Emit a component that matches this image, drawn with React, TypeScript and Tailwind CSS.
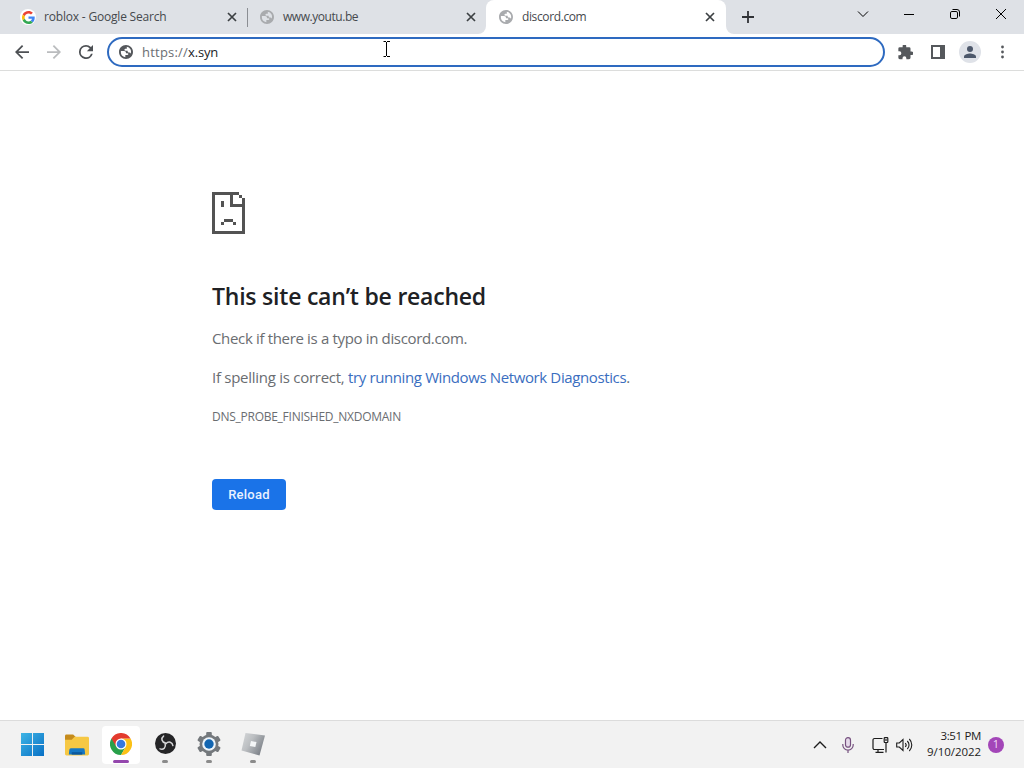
import type { ReactNode } from "react";

function GoogleIcon() {
  return (
    <span className="flex h-4 w-4 items-center justify-center rounded-full bg-white">
      <svg viewBox="0 0 48 48" className="h-[13px] w-[13px]">
        <path fill="#EA4335" d="M24 9.5c3.54 0 6.71 1.22 9.21 3.6l6.85-6.85C35.9 2.38 30.47 0 24 0 14.62 0 6.51 5.38 2.56 13.22l7.98 6.19C12.43 13.72 17.74 9.5 24 9.5z" />
        <path fill="#4285F4" d="M46.98 24.55c0-1.57-.15-3.09-.38-4.55H24v9.02h12.94c-.58 2.96-2.26 5.48-4.78 7.18l7.73 6c4.51-4.18 7.09-10.36 7.09-17.65z" />
        <path fill="#FBBC05" d="M10.53 28.59A14.5 14.5 0 0 1 9.77 24c0-1.6.27-3.14.76-4.59l-7.98-6.19A23.9 23.9 0 0 0 0 24c0 3.88.92 7.54 2.56 10.78l7.97-6.19z" />
        <path fill="#34A853" d="M24 48c6.48 0 11.93-2.13 15.89-5.81l-7.73-6c-2.15 1.45-4.92 2.3-8.16 2.3-6.26 0-11.57-4.22-13.47-9.91l-7.98 6.19C6.51 42.62 14.62 48 24 48z" />
      </svg>
    </span>
  );
}

function GlobeIcon({ className }: { className: string }) {
  return (
    <svg viewBox="0 0 24 24" fill="currentColor" className={className}>
      <path d="M12 1.500C6.200 1.500 1.500 6.200 1.500 12S6.200 22.500 12 22.500 22.500 17.800 22.500 12 17.800 1.500 12 1.500zM4.300 12c0-.500.050-1 .140-1.500H9c2.200 0 3 1.300 3 3.200h2.300c.800 0 1.200.500 1.200 1.200 0 1.100-.800 1.700-2 1.700H11v3.100A7.700 7.700 0 0 1 4.300 12zm15 2.500c-.600-1.200-1.800-1.600-3.100-1.600-1.100 0-1.700-.500-1.700-1.500V10h-3.300c-1 0-1.500-.600-1.500-1.500 0-1.100.800-1.500 2-1.500h1.500V4.300a7.700 7.700 0 0 1 6.100 10.200z" />
    </svg>
  );
}

function CloseIcon() {
  return (
    <svg viewBox="0 0 10 10" className="h-[10px] w-[10px]" stroke="#3c4043" strokeWidth="1.7">
      <path d="M1 1l8 8M9 1L1 9" />
    </svg>
  );
}

function Tab({ icon, title, className }: { icon: ReactNode; title: ReactNode; className: string }) {
  return (
    <div className={`flex h-[34px] shrink-0 items-center ${className}`}>
      {icon}
      <div className="ml-2 flex-1 text-xs whitespace-nowrap text-[#45494d]">{title}</div>
      <CloseIcon />
    </div>
  );
}

function TabStrip() {
  return (
    <header className="flex h-[34px] bg-[#dee1e6]">
      <Tab
        className="w-[247px] pr-[10px] pl-5"
        icon={<GoogleIcon />}
        title={<span className="tracking-[-0.19px]">roblox - Google Search</span>}
      />
      <div className="mt-2 h-[19px] w-px bg-[#8b8e93]" />
      {/* white behind the grey corners gives the active tab its flared feet */}
      <div className="bg-white">
        <Tab
          className="w-[238px] rounded-br-lg bg-[#dee1e6] pr-[10px] pl-[11px]"
          icon={<GlobeIcon className="h-4 w-4 text-[#a9abae]" />}
          title={<span className="tracking-[-0.45px]">www.youtu.be</span>}
        />
      </div>
      <Tab
        className="w-[240px] rounded-t-lg bg-white pr-[11px] pl-3"
        icon={<GlobeIcon className="h-4 w-4 text-[#a9abae]" />}
        title={<span className="tracking-[-0.38px]">discord.com</span>}
      />
      <div className="flex flex-1 bg-white">
        <div className="flex flex-1 items-center rounded-bl-lg bg-[#dee1e6]">
          <svg viewBox="0 0 12 12" className="ml-4 h-3 w-3" stroke="#303236" strokeWidth="1.8">
            <path d="M6 0v12M0 6h12" />
          </svg>
          <div className="mb-[6px] ml-auto flex items-center text-black">
            <svg viewBox="0 0 12 12" className="h-3 w-3" fill="none" stroke="currentColor">
              <path d="M1 3.5l5 5 5-5" />
            </svg>
            <svg viewBox="0 0 12 12" className="ml-[34px] h-3 w-3" fill="none" stroke="currentColor">
              <path d="M1 6.5h10" />
            </svg>
            <svg viewBox="0 0 12 12" className="ml-[34px] h-3 w-3" fill="none" stroke="currentColor">
              <rect x="1.5" y="3.5" width="7" height="7" rx="1.4" />
              <path d="M3.5 1.5h4.5a2.5 2.5 0 0 1 2.5 2.5v4.5" />
            </svg>
            <svg viewBox="0 0 12 12" className="mr-[17px] ml-[34px] h-3 w-3" fill="none" stroke="currentColor">
              <path d="M1 1l10 10M11 1L1 11" />
            </svg>
          </div>
        </div>
      </div>
    </header>
  );
}

function Toolbar() {
  return (
    <div className="flex h-[37px] items-center border-b border-[#dcdddc] bg-white text-[#55585c]">
      <svg viewBox="4 4 16 16" className="ml-[15px] h-[14px] w-[14px]" fill="#4d5054">
        <path d="M20 11H7.83l5.59-5.59L12 4l-8 8 8 8 1.41-1.41L7.83 13H20v-2z" />
      </svg>
      <svg viewBox="4 4 16 16" className="ml-[18px] h-[14px] w-[14px]" fill="#babcbe">
        <path d="M12 4l-1.41 1.41L16.17 11H4v2h12.17l-5.58 5.59L12 20l8-8z" />
      </svg>
      <svg viewBox="4 4 16 16" className="ml-[18px] h-[14px] w-[14px]" fill="#4d5054">
        <path d="M17.65 6.35A7.96 7.96 0 0 0 12 4a8 8 0 1 0 7.73 10h-2.08A6 6 0 1 1 12 6c1.66 0 3.14.69 4.22 1.78L13 11h7V4l-2.35 2.35z" />
      </svg>
      <div className="relative ml-[14px] flex h-[30px] w-[778px] items-center rounded-full border-2 border-[#2e6ac0] pl-[9px]">
        <GlobeIcon className="h-4 w-4" />
        <div className="mt-[2px] ml-2 text-[13px] text-[#212326]">
          <span className="tracking-[0.22px] text-[#6b6e72]">https://</span>
          <span className="tracking-[-0.2px]">x.syn</span>
        </div>
        {/* text cursor */}
        <svg viewBox="0 0 8 16" className="absolute top-[2px] left-[274px] h-4 w-2" fill="none" stroke="black">
          <path d="M0.5 .5h2.5M4 .5h3M3.5 1v14M.5 15.5h2.5M4 15.5h3" />
        </svg>
      </div>
      <svg viewBox="1.5 2 21 21" className="ml-[13px] h-[15px] w-[15px]" fill="currentColor">
        <path d="M20.5 11H19V7a2 2 0 0 0-2-2h-4V3.500a2.500 2.500 0 0 0-5 0V5H4a2 2 0 0 0-2 2v3.800h1.500a2.700 2.700 0 0 1 0 5.400H2V20c0 1.100.9 2 2 2h3.800v-1.500a2.700 2.700 0 0 1 5.400 0V22H17a2 2 0 0 0 2-2v-4h1.500a2.500 2.500 0 0 0 0-5z" />
      </svg>
      <svg viewBox="0 0 14 14" className="ml-[18px] h-[14px] w-[14px]" fill="currentColor">
        <path fillRule="evenodd" d="M0 0h14v14H0zM2 2v10h7V2z" />
      </svg>
      <div className="ml-[14px] flex h-[22px] w-[22px] items-center justify-center rounded-full bg-[#dfe2e8]">
        <svg viewBox="4 4 16 16" className="h-3 w-3" fill="#4d586b">
          <circle cx="12" cy="8" r="4" />
          <path d="M12 14c-2.670 0-8 1.340-8 4v2h16v-2c0-2.660-5.330-4-8-4z" />
        </svg>
      </div>
      <svg viewBox="0 0 4 14" className="ml-[19px] h-[14px] w-1" fill="currentColor">
        <circle cx="2.500" cy="2" r="1.400" />
        <circle cx="2.500" cy="7" r="1.400" />
        <circle cx="2.500" cy="12" r="1.400" />
      </svg>
    </div>
  );
}

function SadPage() {
  return (
    <svg viewBox="0 0 11 14" className="h-[42px] w-[33px]" fill="#535353" shapeRendering="crispEdges">
      <path d="M0 0h9v1H7v3h3V3h1v11H0zM1 1v12h9V5H6V1z" fillRule="evenodd" />
      <path d="M9 1h1v1H9zM10 2h1v1h-1zM3 3h1v2H3zM4 9h3v1H4zM3 10h1v1H3zM7 10h1v1H7z" />
    </svg>
  );
}

function ErrorPage() {
  return (
    <main className="flex-1 bg-white pt-[121px] pl-[212px] text-[#6a6d71]">
      <SadPage />
      <h1 className="mt-[45px] text-[23px] leading-[34px] font-semibold whitespace-nowrap text-[#202124]">
        <span className="tracking-[-0.22px]">This site can’t be reached</span>
      </h1>
      <p className="mt-[14px] text-[15px] leading-[22px]">
        <span className="tracking-[-0.34px]">Check if there is a typo in discord.com.</span>
      </p>
      <p className="mt-[17px] text-[15px] leading-[22px]">
        <span className="tracking-[-0.27px]">If spelling is correct, </span>
        <a className="tracking-[-0.38px] text-[#3a6ec0]">try running Windows Network Diagnostics</a>.
      </p>
      <p className="mt-[19px] text-xs leading-5">
        <span className="tracking-[-0.26px]">DNS_PROBE_FINISHED_NXDOMAIN</span>
      </p>
      <button className="mt-[52px] block h-[31px] w-[74px] rounded bg-[#1a73e8] font-[Roboto] text-[13px] font-medium tracking-[0.25px] text-[#e8f1ff]">
        Reload
      </button>
    </main>
  );
}

function TaskItem({ children, active }: { children: ReactNode; active?: boolean }) {
  return (
    <div
      className={`flex h-[38px] w-[38px] flex-col items-center rounded pt-[6px] ${active ? "bg-white" : ""}`}
    >
      <div className="flex h-6 w-6 items-center justify-center">{children}</div>
      <div
        className={`mt-[4px] h-[3px] shrink-0 rounded-full ${active ? "w-4 bg-[#9447ad]" : "w-[6px] bg-[#8b8b8b]"}`}
      />
    </div>
  );
}

function Taskbar() {
  return (
    <footer className="flex h-12 items-center border-t border-[#dcdcdc] bg-[#f2f2f2] text-[#1c1c1c]">
      <svg viewBox="0 0 24 24" className="ml-[21px] h-[23px] w-[23px] shrink-0">
        <defs>
          <linearGradient id="win" x1="0" y1="0" x2="24" y2="24" gradientUnits="userSpaceOnUse">
            <stop stopColor="#3fb5e5" />
            <stop offset="1" stopColor="#0870c5" />
          </linearGradient>
        </defs>
        <path fill="url(#win)" d="M0 0h11.500v11.500H0zM12.500 0H24v11.500H12.500zM0 12.500h11.500V24H0zM12.500 12.500H24V24H12.500z" />
      </svg>
      <svg viewBox="0 0 25 22" className="ml-[21px] h-[22px] w-[24px] shrink-0">
        <path fill="#c58b1c" d="M1.500 0h7l3 3-2 3H0V1.500A1.500 1.500 0 0 1 1.500 0z" />
        <path fill="#f6c844" d="M10 2.500h13.500A1.500 1.500 0 0 1 25 4v16.500a1.500 1.500 0 0 1-1.500 1.500h-22A1.500 1.500 0 0 1 0 20.500V5.500h7z" />
        <path fill="#1678c4" d="M6 14.500h13a1.500 1.500 0 0 1 1.500 1.500l.5 5H4l.5-5a2 2 0 0 1 1.500-1.500z" />
        <path fill="#0b589c" d="M7 18.500h11V21H7z" />
      </svg>
      <div className="ml-[13px] flex gap-[6px]">
        <TaskItem active>
          <svg viewBox="0 0 24 24" className="h-[22px] w-[22px]">
            <path fill="#28a04a" d="M1.600 6A12 12 0 0 0 12 24l5.200-9z" />
            <path fill="#fbc116" d="M22.400 6A12 12 0 0 1 12 24l5.200-9L12 6z" />
            <path fill="#e33b2e" d="M1.600 6L6.800 15 12 6h10.400A12 12 0 0 0 1.600 6z" />
            <circle cx="12" cy="12" r="6" fill="white" />
            <circle cx="12" cy="12" r="4.700" fill="#3478de" />
          </svg>
        </TaskItem>
        <TaskItem>
          <svg viewBox="0 0 24 24" className="h-[21px] w-[21px]">
            <circle cx="12" cy="12" r="12" fill="#252527" />
            <g fill="none" stroke="#d8d8da" strokeWidth="1.700" strokeLinecap="round">
              <path d="M12 11.500C7.500 10.500 6.500 6 9.800 3.500" />
              <path d="M12 11.500C7.500 10.500 6.500 6 9.800 3.500" transform="rotate(120 12 12)" />
              <path d="M12 11.500C7.500 10.500 6.500 6 9.800 3.500" transform="rotate(240 12 12)" />
            </g>
          </svg>
        </TaskItem>
        <TaskItem>
          <svg viewBox="0 0 24 24" className="h-6 w-6 shrink-0">
            <g fill="#74787c">
              <circle cx="12" cy="12" r="9.500" />
              <rect x="9.200" width="5.600" height="24" rx="1" />
              <rect x="9.200" width="5.600" height="24" rx="1" transform="rotate(60 12 12)" />
              <rect x="9.200" width="5.600" height="24" rx="1" transform="rotate(120 12 12)" />
            </g>
            <circle cx="12" cy="12" r="6.800" fill="#edf4fa" />
            <circle cx="12" cy="12" r="4.700" fill="#1265b1" />
          </svg>
        </TaskItem>
        <TaskItem>
          <svg viewBox="0 0 24 24" className="h-6 w-6 shrink-0">
            <defs>
              <linearGradient id="metal" x2="1" y2=".6">
                <stop stopColor="#d6d8da" />
                <stop offset=".45" stopColor="#bcbfc2" />
                <stop offset="1" stopColor="#7c8188" />
              </linearGradient>
            </defs>
            <path fill="url(#metal)" d="M4.500 1L24 3.500 18.500 23.500 .5 18.500z" />
            <path fill="#f4f6f7" d="M10 9l5.500 1-1.200 5-5.500-1z" />
          </svg>
        </TaskItem>
      </div>
      <div className="ml-auto flex items-center">
        <svg viewBox="0 0 14 8" className="h-2 w-[14px]" fill="none" stroke="currentColor" strokeWidth="1.400">
          <path d="M1 7l6-6 6 6" />
        </svg>
        <svg viewBox="0 0 12 16" className="ml-[15px] h-4 w-3" fill="none" stroke="#76517f" strokeWidth="1.200">
          <rect x="3.500" y=".7" width="5" height="9.500" rx="2.500" fill="#e6d9ea" />
          <path d="M.8 7v1a5.200 5.200 0 0 0 10.400 0V7M6 13v3" />
        </svg>
        <svg viewBox="0 0 17 16" className="ml-[18px] h-4 w-[17px]" fill="none" stroke="currentColor" strokeWidth="1.200">
          <path d="M10.500 1.500h-8a1.500 1.500 0 0 0-1.500 1.500v8a1.500 1.500 0 0 0 1.500 1.500H12M6 12.500v2.500M3.500 15.400h8M14 6v9.500M12.500 5.500h3" />
          <rect x="12.200" y=".7" width="3.600" height="4.800" rx=".7" />
          <path d="M14 2v2" />
        </svg>
        <svg viewBox="0 0 17 14" className="ml-[7px] h-[14px] w-[17px]" fill="none" stroke="currentColor" strokeWidth="1.100">
          <path d="M.7 5v4h2.600L7 12.500v-11L3.300 5zM9.300 5a3 3 0 0 1 0 4M11.300 3a5.500 5.500 0 0 1 0 8M13.300 1a8.500 8.500 0 0 1 0 12" />
        </svg>
        <div className="mb-[2px] ml-[14px] w-[54px] text-right text-[11.5px] leading-4 whitespace-nowrap">
          <div className="tracking-[-0.35px]">3:51 PM</div>
          <div className="tracking-[-0.05px]">9/10/2022</div>
        </div>
        <div className="mr-5 ml-[7px] flex h-4 w-4 items-center justify-center rounded-full bg-[#a346b8] text-[11px] text-[#f2dcf7]">
          1
        </div>
      </div>
    </footer>
  );
}

export default function App() {
  return (
    <div className="flex h-screen w-[1024px] flex-col overflow-hidden bg-white font-['Open_Sans','Noto_Sans',sans-serif]">
      <TabStrip />
      <Toolbar />
      <ErrorPage />
      <Taskbar />
    </div>
  );
}
